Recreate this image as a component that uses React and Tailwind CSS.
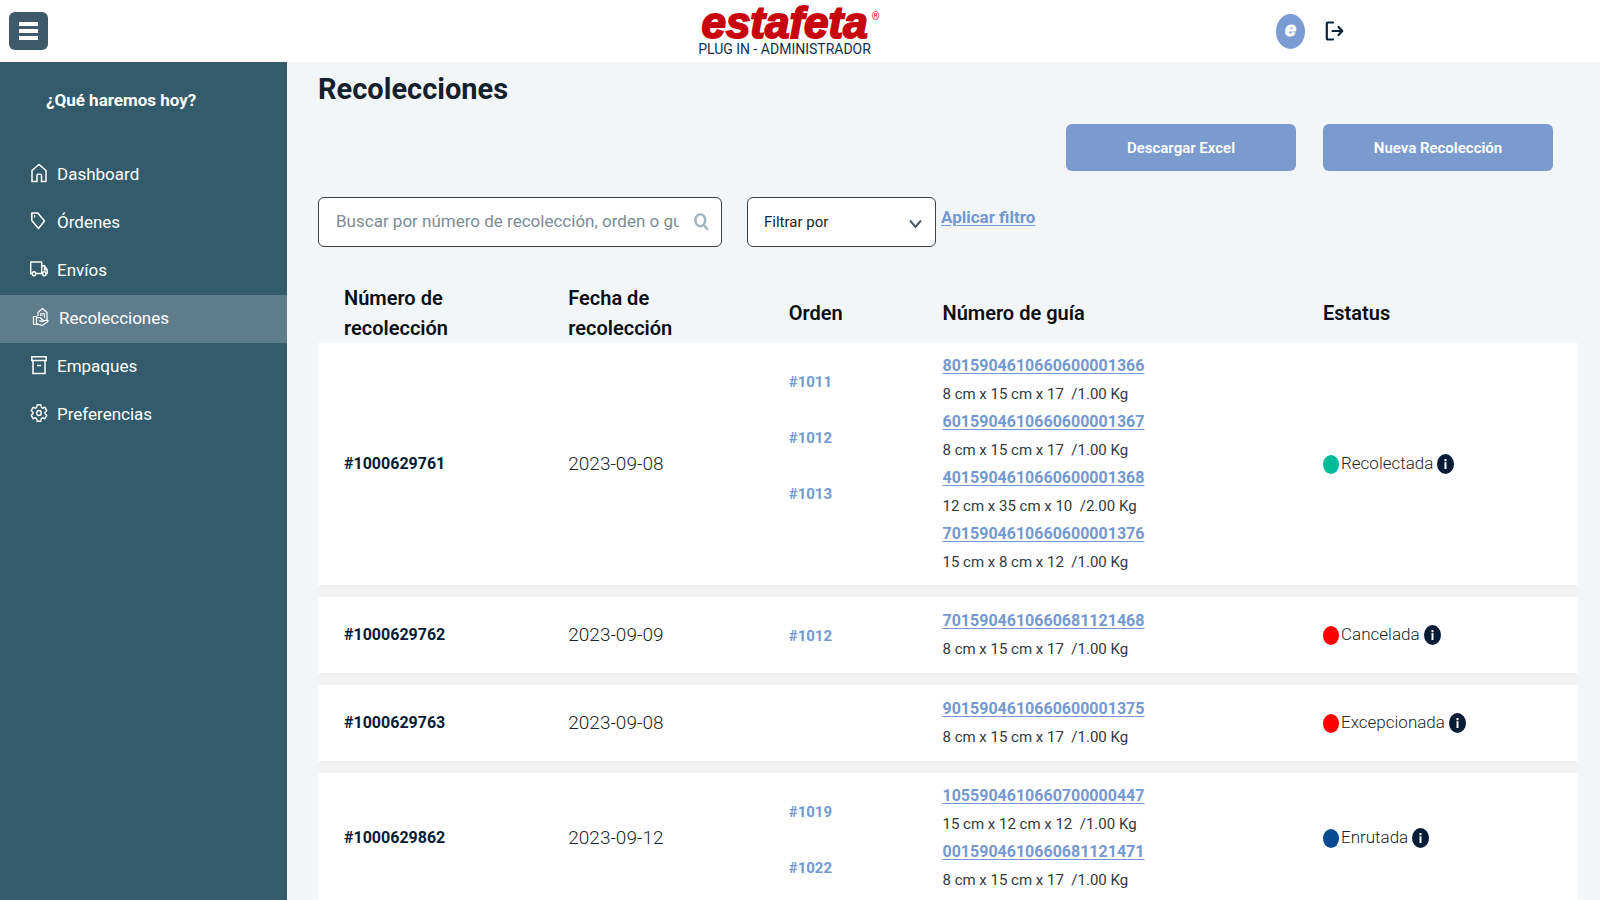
import { useState } from "react";

const BLUE_LINK = "font-bold text-[#7499d0] underline underline-offset-2 hover:text-[#5a80bb]";

function HomeIcon() {
  return (
    <svg width="18" height="20" viewBox="0 0 18 20" fill="none" stroke="currentColor" strokeWidth="1.5">
      <path d="M2 18.5V7.5L9 1.5l7 6v11h-4.5v-6a1.3 1.3 0 0 0-1.3-1.3H8.3A1.3 1.3 0 0 0 7 12.5v6z" />
    </svg>
  );
}

function TagIcon() {
  return (
    <svg width="18" height="20" viewBox="0 0 18 20" fill="none" stroke="currentColor" strokeWidth="1.5" strokeLinejoin="round">
      <path d="M1.8 2h6l6.7 8-6 7.5-6.7-8z" />
      <path d="M4.5 4v2.5" />
    </svg>
  );
}

function TruckIcon() {
  return (
    <svg width="18" height="20" viewBox="0 0 18 20" fill="none" stroke="currentColor" strokeWidth="1.4">
      <path d="M2.5 14.5H.7V3h11v11.5H5.5M11.7 6.8h2.8l2.7 4v3.7h-1.4M13 14.5h-1.3M14.5 7v3.8h2.7" />
      <ellipse cx="4" cy="14.7" rx="1.7" ry="2" />
      <ellipse cx="14.3" cy="14.7" rx="1.7" ry="2" />
    </svg>
  );
}

function PickupIcon() {
  return (
    <svg width="18" height="20" viewBox="0 0 18 20" fill="none" stroke="currentColor" strokeWidth="1.2" strokeLinejoin="round">
      <path d="M6 9V5.5L10.5 1.5 15 5.5v8" />
      <path d="M8.5 9V6.5h4V11M8.5 8h4" strokeWidth=".8" />
      <path d="M1.5 9.5h3v8h-3z" />
      <path d="M4.5 10.5h3.2l3 2.3c.8.7.1 1.7-.9 1.5l-2.6-.6M10.8 14.2l4-1c1.2-.2 1.7 1.2.7 1.8l-4.7 3c-.6.3-1.2.3-1.8.1l-4.5-1.3" />
    </svg>
  );
}

function ArchiveIcon() {
  return (
    <svg width="18" height="20" viewBox="0 0 18 20" fill="none" stroke="currentColor" strokeWidth="1.5">
      <path d="M1.8 1.8h14.4v3.7H1.8zM3 5.5h12v13H3zM7 10.5h4" />
    </svg>
  );
}

function GearIcon() {
  return (
    <svg width="18" height="20" viewBox="0 0 24 24" preserveAspectRatio="none" fill="none" stroke="currentColor" strokeWidth="1.8" strokeLinejoin="round">
      <path d="M9.6 2h4.8l.7 3.2 1.7 1 3.2-1 2.3 4-2.4 2.2v1.2l2.4 2.2-2.3 4-3.2-1-1.7 1-.7 3.2H9.6l-.7-3.2-1.7-1-3.2 1-2.3-4 2.4-2.2v-1.2L1.7 9.2l2.3-4 3.2 1 1.7-1z" />
      <circle cx="12" cy="12" r="3" />
    </svg>
  );
}

const menu = [
  { label: "Dashboard", icon: HomeIcon },
  { label: "Órdenes", icon: TagIcon },
  { label: "Envíos", icon: TruckIcon },
  { label: "Recolecciones", icon: PickupIcon, active: true },
  { label: "Empaques", icon: ArchiveIcon },
  { label: "Preferencias", icon: GearIcon },
];

const pickups = [
  {
    id: "#1000629761",
    date: "2023-09-08",
    orders: ["#1011", "#1012", "#1013"],
    guides: [
      { number: "8015904610660600001366", size: "8 cm x 15 cm x 17", weight: "/1.00 Kg" },
      { number: "6015904610660600001367", size: "8 cm x 15 cm x 17", weight: "/1.00 Kg" },
      { number: "4015904610660600001368", size: "12 cm x 35 cm x 10", weight: "/2.00 Kg" },
      { number: "7015904610660600001376", size: "15 cm x 8 cm x 12", weight: "/1.00 Kg" },
    ],
    status: "Recolectada",
    dot: "bg-[#00bc98]",
  },
  {
    id: "#1000629762",
    date: "2023-09-09",
    orders: ["#1012"],
    guides: [{ number: "7015904610660681121468", size: "8 cm x 15 cm x 17", weight: "/1.00 Kg" }],
    status: "Cancelada",
    dot: "bg-[#ff0000]",
  },
  {
    id: "#1000629763",
    date: "2023-09-08",
    orders: [],
    guides: [{ number: "9015904610660600001375", size: "8 cm x 15 cm x 17", weight: "/1.00 Kg" }],
    status: "Excepcionada",
    dot: "bg-[#ff0000]",
  },
  {
    id: "#1000629862",
    date: "2023-09-12",
    orders: ["#1019", "#1022"],
    guides: [
      { number: "1055904610660700000447", size: "15 cm x 12 cm x 12", weight: "/1.00 Kg" },
      { number: "0015904610660681121471", size: "8 cm x 15 cm x 17", weight: "/1.00 Kg" },
    ],
    status: "Enrutada",
    dot: "bg-[#054a91]",
  },
];

function Header({ onMenuClick }) {
  return (
    <header className="grid h-[62px] shrink-0 grid-cols-[1fr_auto_1fr] items-center bg-white pr-10 pl-[9px]">
      <button
        onClick={onMenuClick}
        aria-label="Menú"
        className="flex h-[38px] w-[39px] items-center justify-center rounded-md bg-[#3f5b6b] text-white"
      >
        <svg width="19" height="18" viewBox="0 0 19 18" fill="currentColor">
          <path d="M0 0h19v4H0zM0 7h19v4H0zM0 14h19v4H0z" />
        </svg>
      </button>

      <div className="flex flex-col items-center">
        <div className="flex items-start text-[#c8040e]">
          <span className="pl-3 font-['Liberation_Sans',sans-serif] text-[44px] leading-9 font-bold italic [-webkit-text-stroke:2px_#c8040e]">
            estafeta
          </span>
          <span className="pt-1 pl-1 text-[10px]">®</span>
        </div>
        <span className="text-[14px] leading-4 text-[#14304a]">PLUG IN - ADMINISTRADOR</span>
      </div>

      <div className="mr-[216px] flex items-center justify-end gap-5">
        <span className="flex h-[35px] w-[29px] items-center justify-center rounded-[50%] bg-[#7b9bd3] pb-1 font-['Liberation_Sans',sans-serif] text-xl font-bold text-white italic [-webkit-text-stroke:1px_white]">
          e
        </span>
        <button aria-label="Cerrar sesión" className="text-[#0a2238]">
          <svg width="19" height="20" viewBox="0 0 19 20" fill="none" stroke="currentColor" strokeWidth="2.2" strokeLinecap="round" strokeLinejoin="round">
            <path d="M8 1.5H3Q1.8 1.5 1.8 3v14Q1.8 18.5 3 18.5h5M7.5 10H17M13.5 6l3.8 4-3.8 4" />
          </svg>
        </button>
      </div>
    </header>
  );
}

function Sidebar() {
  return (
    <aside className="w-[287px] shrink-0 bg-[#335b6b] text-[17px] text-white">
      <p className="pt-6 pl-[46px] leading-7 font-bold">¿Qué haremos hoy?</p>
      <nav className="pt-[37px]">
        {menu.map(({ label, icon: Icon, active }) => (
          <a
            key={label}
            href="#"
            className={`flex h-12 items-center gap-[9px] ${
              active ? "bg-[#5e7c8b] pl-8" : "pl-[30px]"
            }`}
          >
            <span className="pb-1">
              <Icon />
            </span>
            {label}
          </a>
        ))}
      </nav>
    </aside>
  );
}

function InfoIcon() {
  return (
    <svg width="17" height="20" viewBox="0 0 17 20">
      <ellipse cx="8.5" cy="10" rx="8.5" ry="10" fill="#041c36" />
      <path d="M7.5 5h2v2.2h-2zM7.5 8.3h2V15h-2z" fill="white" />
    </svg>
  );
}

function PickupRow({ pickup }) {
  const cell = "h-[88px] border-b-12 border-[#f2f2f2] bg-white pl-[26px]";

  return (
    <tr>
      <td className={`${cell} font-bold text-[#041c36]`}>{pickup.id}</td>
      <td className={`${cell} text-[19px] font-light`}>{pickup.date}</td>
      <td className={`${cell} pt-[11px] align-top`}>
        {pickup.orders.map((order) => (
          <a key={order} href="#" className="flex h-14 items-center text-[15px] font-bold text-[#7499d0]">
            {order}
          </a>
        ))}
      </td>
      <td className={`${cell} py-[9px]`}>
        {pickup.guides.map((guide) => (
          <div key={guide.number} className="leading-7">
            <a href="#" className={BLUE_LINK}>{guide.number}</a>
            <div className="text-[15px] text-[#33393f]">{guide.size}&nbsp; {guide.weight}</div>
          </div>
        ))}
      </td>
      <td className={cell}>
        <div className="flex items-center">
          <span className={`h-[19px] w-4 rounded-[50%] ${pickup.dot}`}></span>
          <span className="pr-1 pl-[2px] text-[17px] font-light">{pickup.status}</span>
          <InfoIcon />
        </div>
      </td>
    </tr>
  );
}

export default function App() {
  const [open, setOpen] = useState(true);

  return (
    <div className="flex h-screen flex-col overflow-hidden bg-[#f2f6f9] font-[Roboto,sans-serif] text-base text-[#212529]">
      <Header onMenuClick={() => setOpen(!open)} />

      <div className="flex min-h-0 flex-1">
        {open && <Sidebar />}

        <main className="min-w-0 flex-1 overflow-y-auto pr-[22px] pl-[31px] [scrollbar-width:none]">
          <h1 className="pt-[9px] text-[29px] leading-9 font-bold text-[#14202b]">Recolecciones</h1>

          {/* Actions */}
          <div className="flex justify-end gap-[27px] pt-[17px] pr-[25px]">
            <button className="h-[47px] w-[230px] rounded-md bg-[#7b9bcf] pt-px text-[15px] font-semibold text-white">Descargar Excel</button>
            <button className="h-[47px] w-[230px] rounded-md bg-[#7b9bcf] pt-px text-[15px] font-semibold text-white">Nueva Recolección</button>
          </div>

          {/* Search and filter */}
          <div className="flex pt-[26px]">
            <div className="flex h-[50px] w-[404px] items-center rounded-md border border-[#3c4043] bg-white pr-3 pl-[17px]">
              <input
                type="text"
                aria-label="Buscar"
                placeholder="Buscar por número de recolección, orden o guía"
                className="w-[343px] bg-transparent text-[17px] outline-none placeholder:text-[#7d8b94]"
              />
              <svg className="ml-auto" width="15" height="18" viewBox="0 0 15 18" fill="none" stroke="#a3b4bf" strokeWidth="2.4">
                <ellipse cx="6.3" cy="7.3" rx="4.9" ry="5.9" />
                <path d="M9.8 12l4 4.8" />
              </svg>
            </div>
            <div className="relative ml-[25px]">
              <select
                aria-label="Filtrar por"
                className="h-[50px] w-[189px] appearance-none rounded-md border border-[#3c4043] bg-white pl-4 text-[15px] text-[#212529]"
              >
                <option>Filtrar por</option>
                <option>Estatus</option>
                <option>Fecha de recolección</option>
              </select>
              <svg className="pointer-events-none absolute top-[22px] right-[14px]" width="13" height="10" viewBox="0 0 13 10" fill="none" stroke="#4c5a63" strokeWidth="2">
                <path d="M1 1.5l5.5 6.5L12 1.5" />
              </svg>
            </div>
            <a href="#" className={`ml-[5px] pt-2 text-[17px] leading-6 ${BLUE_LINK}`}>Aplicar filtro</a>
          </div>

          <table className="mt-9 w-full table-fixed border-separate border-spacing-0 text-left">
            <thead>
              <tr className="text-xl leading-[30px] text-[#0a0f14]">
                <th className="w-[17.8%] pr-20 pl-[26px] font-semibold">Número de recolección</th>
                <th className="w-[17.5%] pr-20 pl-[26px] font-semibold">Fecha de recolección</th>
                <th className="w-[12.2%] pl-[26px] font-semibold">Orden</th>
                <th className="w-[30.2%] pl-[26px] font-semibold">Número de guía</th>
                <th className="pl-[26px] font-semibold">Estatus</th>
              </tr>
            </thead>
            <tbody>
              {pickups.map((pickup) => (
                <PickupRow key={pickup.id} pickup={pickup} />
              ))}
            </tbody>
          </table>
        </main>
      </div>
    </div>
  );
}
